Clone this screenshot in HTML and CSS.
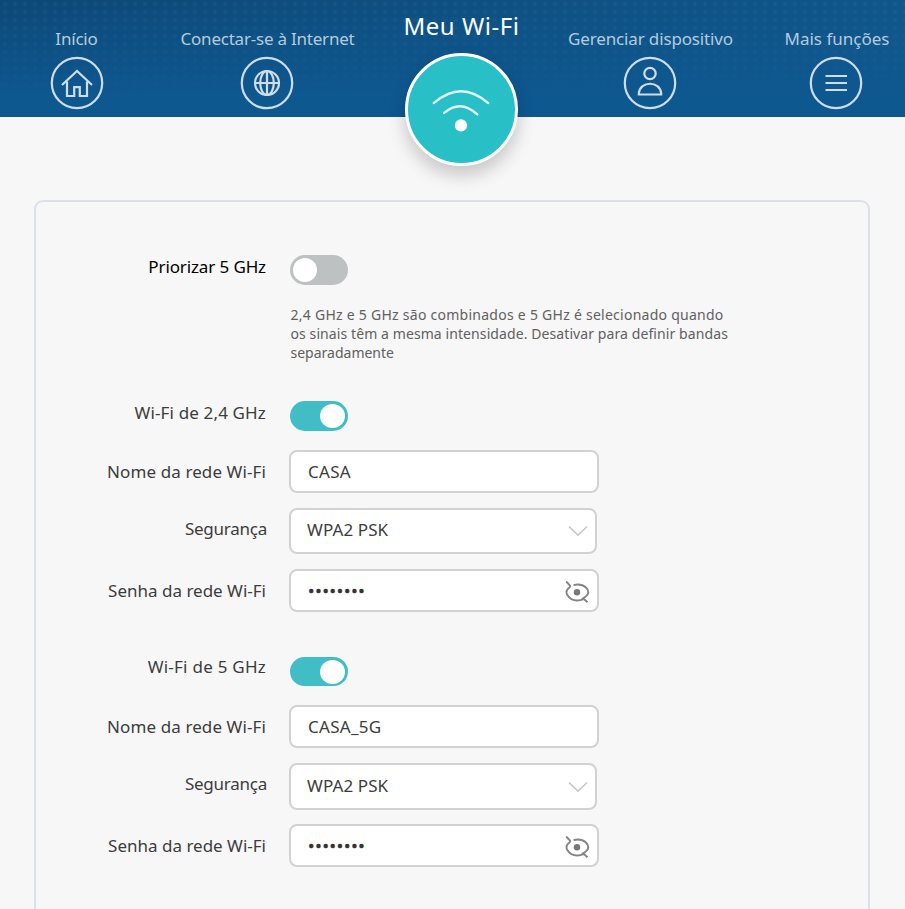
FILE: index.html
```html
<!DOCTYPE html>
<html lang="pt-BR">
<head>
<meta charset="utf-8">
<title>Meu Wi-Fi</title>
<link rel="stylesheet" href="styles.css">
</head>
<body>
<header class="nav">
  <a class="nav-item"><span class="nav-label t-inicio">Início</span>
    <svg class="nav-icon" viewBox="0 0 54 54"><circle cx="27" cy="27" r="25.2"/><path d="M12 29 27 15 42 29M17 25.500V40H24.2V31.2H29.8V40H37V25.500"/></svg></a>
  <a class="nav-item"><span class="nav-label t-conectar">Conectar-se à Internet</span>
    <svg class="nav-icon" viewBox="0 0 54 54"><circle cx="27" cy="27" r="25.2"/><circle cx="27" cy="27" r="12"/><ellipse cx="27" cy="27" rx="6.8" ry="12"/><path d="M27 15V39M15 27H39"/></svg></a>
  <a class="nav-item active"><span class="nav-title">Meu Wi-Fi</span>
    <span class="wifi-disc"><svg viewBox="0 0 108 108"><path d="M26 47.500Q53.500 23.500 81 47.500M36.500 57.500Q53 43 70 59"/><circle cx="53.500" cy="70" r="6.200"/></svg></span></a>
  <a class="nav-item"><span class="nav-label t-gerenciar">Gerenciar dispositivo</span>
    <svg class="nav-icon" viewBox="0 0 54 54"><circle cx="27" cy="27" r="25.2"/><circle cx="27" cy="17.500" r="5.700"/><path d="M15.800 38.500V37.500C17 24.500 37 24.500 38.200 37.500V38.500Z"/></svg></a>
  <a class="nav-item"><span class="nav-label t-mais">Mais funções</span>
    <svg class="nav-icon" viewBox="0 0 54 54"><circle cx="27" cy="27" r="25.2"/><path d="M16.500 20H38M16.500 27H38M16.500 34H38"/></svg></a>
</header>
<main class="card">
  <section class="group">
    <div class="row row-toggle-first"><span class="label strong t-priorizar">Priorizar 5 GHz</span><span class="toggle off"></span></div>
    <p class="help"><span class="h1">2,4 GHz e 5 GHz são combinados e 5 GHz é selecionado quando</span><br><span class="h2">os sinais têm a mesma intensidade. Desativar para definir bandas</span><br><span class="h3">separadamente</span></p>
  </section>
  <section class="group group-24">
    <div class="row row-toggle"><span class="label t-w24">Wi-Fi de 2,4 GHz</span><span class="toggle on"></span></div>
    <div class="row"><span class="label t-nome">Nome da rede Wi-Fi</span><div class="field"><span class="t-casa">CASA</span></div></div>
    <div class="row"><span class="label t-seg">Segurança</span><div class="field select"><span class="t-wpa">WPA2 PSK</span><svg class="chevron" viewBox="0 0 20 12"><path d="M1 1.500 10 10.200 19 1.500"/></svg></div></div>
    <div class="row"><span class="label t-senha">Senha da rede Wi-Fi</span><div class="field"><span class="dots">••••••••</span><svg class="eye" viewBox="0 0 26 24"><path d="M2.200 1.500 6.200 5.800Q6 7.200 4.500 8.300 1.500 11 3 14.500 6.500 20.500 13.200 20.500 17 20.500 19 19.300M9.500 5.200Q17 3.200 22 7.500 26 11.500 23 15.300 21.500 17.300 19 18.300L23.500 22.200"/><circle cx="13" cy="12.300" r="3.200"/></svg></div></div>
  </section>
  <section class="group group-5">
    <div class="row row-toggle"><span class="label t-w5">Wi-Fi de 5 GHz</span><span class="toggle on"></span></div>
    <div class="row"><span class="label t-nome">Nome da rede Wi-Fi</span><div class="field"><span class="t-casa">CASA_5G</span></div></div>
    <div class="row row-select"><span class="label t-seg">Segurança</span><div class="field select"><span class="t-wpa">WPA2 PSK</span><svg class="chevron" viewBox="0 0 20 12"><path d="M1 1.500 10 10.200 19 1.500"/></svg></div></div>
    <div class="row"><span class="label t-senha">Senha da rede Wi-Fi</span><div class="field"><span class="dots">••••••••</span><svg class="eye" viewBox="0 0 26 24"><path d="M2.200 1.500 6.200 5.800Q6 7.200 4.500 8.300 1.500 11 3 14.500 6.500 20.500 13.200 20.500 17 20.500 19 19.300M9.500 5.200Q17 3.200 22 7.500 26 11.500 23 15.300 21.500 17.300 19 18.300L23.500 22.200"/><circle cx="13" cy="12.300" r="3.200"/></svg></div></div>
  </section>
</main>
</body>
</html>
```
FILE: styles.css
```css
* { box-sizing: border-box; }
html { overflow: hidden; }
body { margin: 0; height: 909px; overflow: hidden; background: #f7f7f7; color: #3c3c3c; font: 17px/24px "Noto Sans", sans-serif; white-space: nowrap; }

.nav {
  display: grid; grid-template-columns: 153px 228px 160px 218px 154px; height: 117px;
  background:
    linear-gradient(180deg, transparent 0%, #0e5890 85%),
    radial-gradient(circle, rgba(70,140,180,.13) 1px, transparent 3px) 0 0 / 10px 8px,
    linear-gradient(90deg, #0d4877, #10568a);
}
.nav-item { display: flex; flex-direction: column; align-items: center; color: #b5cbdc; padding-top: 27px; }
.nav-label { height: 28px; }
.nav-icon { width: 54px; height: 54px; flex: none; margin-top: 1px; fill: none; stroke: #cfdde8; stroke-width: 2.200; }
.nav-item.active { padding-top: 10px; color: #fff; position: relative; z-index: 1; }
.nav-title { font-size: 24px; line-height: 32px; height: 43px; letter-spacing: .55px; margin-left: 1px; }
.t-inicio { letter-spacing: -.2px; }
.t-conectar { letter-spacing: -.22px; margin-left: 1px; }
.t-gerenciar { letter-spacing: -.15px; margin-left: 1px; }
.t-mais { margin-left: 2px; }
.wifi-disc { width: 113px; height: 113px; flex: none; border: 3px solid #fff; border-radius: 50%; background: #29bfc7; box-shadow: 0 9px 18px rgba(0,0,0,.2); }
.wifi-disc svg { display: block; width: 107px; height: 107px; fill: none; stroke: #e4f8f8; stroke-width: 2.400; stroke-linecap: round; }
.wifi-disc svg circle { fill: #fff; stroke: none; }

.card { margin: 83px 35px 0 34px; height: 740px; border: 2px solid #dbe0e9; border-radius: 9px; padding-top: 52px; }
.row { display: grid; grid-template-columns: 231px 310px; column-gap: 22px; align-items: start; margin-bottom: 15px; }
.label { text-align: right; padding: 10px 1px 0 0; }
.label.t-seg { padding: 9px 0 0; letter-spacing: -.25px; }
.strong { color: #000; }
.row-toggle-first, .row-toggle { margin-bottom: 0; }
.row-toggle-first .label, .row-toggle .label { padding-top: 1px; }
.t-priorizar { letter-spacing: -.12px; }
.t-w24 { letter-spacing: .15px; }
.t-nome { letter-spacing: .1px; }
.t-w5 { letter-spacing: .25px; }
.t-casa { letter-spacing: .3px; }
.t-wpa { letter-spacing: .1px; }

.toggle { display: block; width: 58px; height: 30px; border-radius: 15px; padding: 3px; margin: 1px 0 0 1px; }
.toggle::after { content: ""; display: block; width: 24px; height: 24px; border-radius: 50%; background: #fff; }
.toggle.on { background: #40bdc5; }
.toggle.on::after { width: 25px; margin-left: 27px; }
.toggle.off { background: #bdc1c2; }

.help { margin: 20px 0 0 254.500px; font-size: 14px; line-height: 19px; color: #606060; }
.h1 { letter-spacing: .26px; }
.h2 { letter-spacing: .09px; }
.group { height: 146px; }
.group-24 { height: 254px; }
.group .row-toggle { height: 50px; }
.group-5 .row-toggle { height: 51px; }
.group-5 .toggle { margin-top: 3px; height: 29px; }

.field { display: flex; align-items: center; justify-content: space-between; height: 43px; width: 310px; border: 2px solid #d2d2d2; border-radius: 8px; background: #fff; padding: 0 7px 0 17px; }
.select { width: 308px; height: 46px; padding: 0 7px 3px 16px; }
.row-select { margin-bottom: 14px; }
.row-select .select { height: 47px; padding-bottom: 2px; }
.chevron { width: 20px; height: 12px; margin-top: 3px; fill: none; stroke: #c4c4c4; stroke-width: 1.500; }
.eye { width: 26px; height: 24px; margin-top: 3px; fill: none; stroke: #858585; stroke-width: 1.900; }
.eye circle { fill: #777; stroke: none; }
.dots { letter-spacing: .8px; color: #333; -webkit-text-stroke: .5px #333; }
```
